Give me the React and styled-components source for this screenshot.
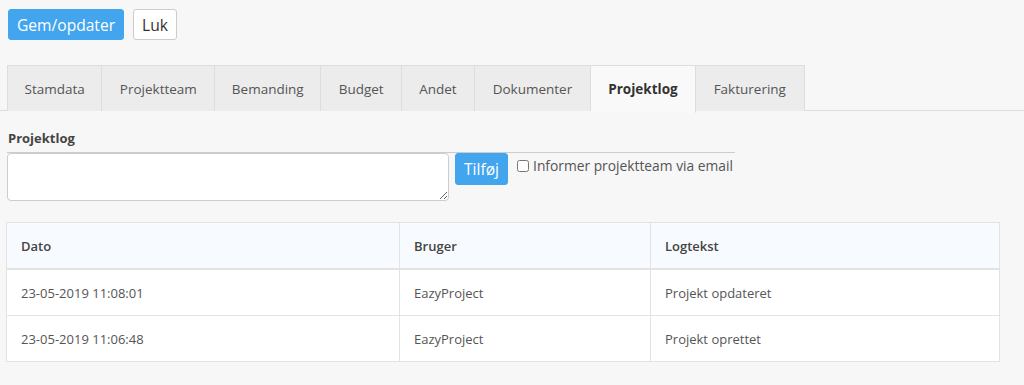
import styled, { createGlobalStyle } from "styled-components";

const Global = createGlobalStyle`
  body {
    margin: 0;
    background: #f7f7f7;
    font-family: "Open Sans", "Liberation Sans", sans-serif;
    color: #555;
  }
`;

const Page = styled.div`
  padding: 9px 0 0 0;
`;

const Toolbar = styled.div`
  display: flex;
  gap: 9px;
  padding-left: 8px;
`;

const Button = styled.button`
  font-family: "Open Sans", "Liberation Sans", sans-serif;
  font-size: 15.6px;
  height: ${(p) => (p.$h ? p.$h : 31)}px;
  padding: 0 ${(p) => (p.$pad ? p.$pad : 8)}px;
  border-radius: 3px;
  cursor: pointer;
  background: ${(p) => (p.$primary ? "#42a5ee" : "#fff")};
  color: ${(p) => (p.$primary ? "#fff" : "#333")};
  border: 1px solid ${(p) => (p.$primary ? "#42a5ee" : "#ccc")};
`;

const Tabs = styled.div`
  display: flex;
  margin-top: 25px;
  padding-left: 7px;
  border-bottom: 1px solid #ddd;
  height: 45px;
`;

const Tab = styled.div`
  display: flex;
  align-items: center;
  padding: 0 ${(p) => p.$pad || 15}px;
  font-size: 13.5px;
  border: 1px solid #ddd;
  border-left: ${(p) => (p.$first ? "1px solid #ddd" : "none")};
  border-bottom: ${(p) => (p.$active ? "1px solid #f9f9f9" : "none")};
  background: ${(p) => (p.$active ? "#f9f9f9" : "#ececec")};
  color: ${(p) => (p.$active ? "#333" : "#555")};
  font-weight: ${(p) => (p.$active ? 700 : 400)};
  height: ${(p) => (p.$active ? 46 : 45)}px;
`;

const Section = styled.div`
  padding: 18px 0 0 7px;
`;

const Label = styled.div`
  font-size: 13px;
  font-weight: 700;
  color: #444;
  padding-left: 1px;
  padding-bottom: 5px;
  width: 727px;
  border-bottom: 1px solid #ccc;
`;

const FormRow = styled.div`
  display: flex;
  align-items: flex-start;
`;

const Area = styled.textarea`
  width: 442px;
  height: 48px;
  box-sizing: border-box;
  border: 1px solid #ccc;
  border-radius: 4px;
  background: #fff;
  margin: 0;
`;

const CheckLabel = styled.label`
  display: flex;
  align-items: center;
  gap: 4px;
  font-size: 13.8px;
  color: #555;
  margin-left: 9px;
  margin-top: 3px;
  input {
    margin: 0;
    width: 12px;
    height: 12px;
  }
`;

const Table = styled.table`
  margin: 21px 0 0 6px;
  width: 994px;
  border-collapse: collapse;
  background: #fff;
  font-size: 13px;
  th, td {
    border: 1px solid #e3e3e3;
    text-align: left;
    padding: 0 14px;
    height: 45px;
  }
  th {
    background: #f7fbff;
    font-weight: 600;
    color: #444;
    border-bottom: 2px solid #e3e3e3;
  }
`;

const rows = [
  ["23-05-2019 11:08:01", "EazyProject", "Projekt opdateret"],
  ["23-05-2019 11:06:48", "EazyProject", "Projekt oprettet"],
];

const tabs = [
  ["Stamdata", 16.5],
  ["Projektteam", 17.5],
  ["Bemanding", 16.5],
  ["Budget", 17.5],
  ["Andet", 17],
  ["Dokumenter", 18],
  ["Projektlog", 17],
  ["Fakturering", 18],
];

export default function App() {
  return (
    <Page>
      <Global />
      <Toolbar>
        <Button $primary>Gem/opdater</Button>
        <Button>Luk</Button>
      </Toolbar>
      <Tabs>
        {tabs.map(([t, pad], i) => (
          <Tab key={t} $first={i === 0} $pad={pad} $active={t === "Projektlog"}>
            {t}
          </Tab>
        ))}
      </Tabs>
      <Section>
        <Label>Projektlog</Label>
        <FormRow>
          <Area />
          <Button $primary $h={32} $pad={8} style={{ marginLeft: 6 }}>Tilføj</Button>
          <CheckLabel>
            <input type="checkbox" />
            Informer projektteam via email
          </CheckLabel>
        </FormRow>
      </Section>
      <Table>
        <colgroup>
          <col style={{ width: 393 }} />
          <col style={{ width: 251 }} />
          <col />
        </colgroup>
        <thead>
          <tr>
            <th>Dato</th>
            <th>Bruger</th>
            <th>Logtekst</th>
          </tr>
        </thead>
        <tbody>
          {rows.map((r) => (
            <tr key={r[0]}>
              {r.map((c, i) => (
                <td key={i}>{c}</td>
              ))}
            </tr>
          ))}
        </tbody>
      </Table>
    </Page>
  );
}
